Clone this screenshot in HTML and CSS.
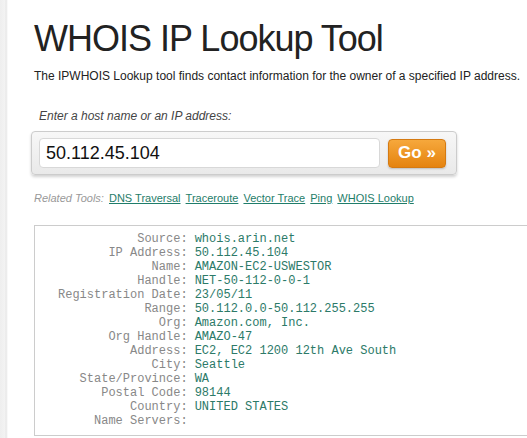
FILE: index.html
```html
<!DOCTYPE html>
<html lang="en">
<head>
    <meta charset="UTF-8">
    <title>WHOIS IP Lookup Tool</title>
    <link rel="stylesheet" href="styles.css">
</head>
<body>
    <div class="page">
        <h1>WHOIS IP Lookup Tool</h1>
        <p class="intro">The IPWHOIS Lookup tool finds contact information for the owner of a specified IP address.</p>

        <!-- lookup form -->
        <form class="lookup">
            <label for="host">Enter a host name or an IP address:</label>
            <div class="lookup-box">
                <input type="text" id="host" name="host" value="50.112.45.104">
                <button type="button">Go &raquo;</button>
            </div>
        </form>

        <p class="related">Related Tools:
            <a href="#">DNS Traversal</a>
            <a href="#">Traceroute</a>
            <a href="#">Vector Trace</a>
            <a href="#">Ping</a>
            <a href="#">WHOIS Lookup</a>
        </p>

        <!-- result -->
        <div class="result">
            <span class="key">Source:</span><span class="val">whois.arin.net</span>
            <span class="key">IP Address:</span><span class="val">50.112.45.104</span>
            <span class="key">Name:</span><span class="val">AMAZON-EC2-USWESTOR</span>
            <span class="key">Handle:</span><span class="val">NET-50-112-0-0-1</span>
            <span class="key">Registration Date:</span><span class="val">23/05/11</span>
            <span class="key">Range:</span><span class="val">50.112.0.0-50.112.255.255</span>
            <span class="key">Org:</span><span class="val">Amazon.com, Inc.</span>
            <span class="key">Org Handle:</span><span class="val">AMAZO-47</span>
            <span class="key">Address:</span><span class="val">EC2, EC2 1200 12th Ave South</span>
            <span class="key">City:</span><span class="val">Seattle</span>
            <span class="key">State/Province:</span><span class="val">WA</span>
            <span class="key">Postal Code:</span><span class="val">98144</span>
            <span class="key">Country:</span><span class="val">UNITED STATES</span>
            <span class="key">Name Servers:</span><span class="val"></span>
        </div>
    </div>
</body>
</html>
```

FILE: styles.css
```css
html, body {
    margin: 0;
    padding: 0;
}
body {
    font-family: Arial, "Liberation Sans", sans-serif;
    color: #333;
    background: #fff;
    overflow: hidden;
}
.page {
    min-height: 438px;
    padding: 14px 0 0 34px;
    background: linear-gradient(to right, #eeeeee 0, #f3f3f3 5px, #e6e6e6 6px, #ffffff 8px);
}
h1 {
    margin: 0;
    font-size: 36px;
    font-weight: normal;
    letter-spacing: -1px;
    line-height: 50px;
    color: #222;
}
.intro {
    margin: 4px 0 0;
    font-size: 12px;
    line-height: 16px;
    color: #222;
}
.lookup {
    margin: 24px 0 0;
    width: 423px;
}
.lookup label {
    display: block;
    margin-left: 5px;
    font-size: 12px;
    font-style: italic;
    color: #444;
    line-height: 16px;
}
.lookup-box {
    display: flex;
    align-items: center;
    gap: 8px;
    margin: 7px 0 0 -3px;
    padding: 6px 10px 6px 7px;
    border: 1px solid #ccc;
    border-radius: 4px;
    background: linear-gradient(#f7f7f7, #e9e9e9);
    box-shadow: 0 2px 3px rgba(0, 0, 0, 0.18);
}
.lookup-box input {
    flex: 1;
    height: 30px;
    box-sizing: border-box;
    padding: 0 6px;
    border: 1px solid #d8d8d8;
    border-radius: 4px;
    font-family: Arial, "Liberation Sans", sans-serif;
    font-size: 18px;
    color: #111;
}
.lookup-box button {
    width: 58px;
    height: 29px;
    border: 1px solid #d57a12;
    border-radius: 4px;
    background: linear-gradient(#f6a83c, #e5830f);
    color: #fff;
    font-family: Arial, "Liberation Sans", sans-serif;
    font-size: 17px;
    font-weight: bold;
    cursor: pointer;
    box-shadow: 0 1px 2px rgba(0, 0, 0, 0.2);
}
.related {
    margin: 16px 0 0;
    font-size: 11px;
    line-height: 14px;
    font-style: italic;
    color: #999;
}
.related a {
    font-style: normal;
    color: #1f7d6a;
    margin-left: 2px;
}
.result {
    display: grid;
    grid-template-columns: auto 1fr;
    column-gap: 7px;
    margin-top: 20px;
    padding: 6px 0 7px 23px;
    border: 1px solid #ccc;
    border-right: none;
    font-family: "Liberation Mono", monospace;
    font-size: 12px;
    line-height: 14px;
}
.key {
    text-align: right;
    color: #888;
}
.val {
    color: #2c7a68;
}
```
